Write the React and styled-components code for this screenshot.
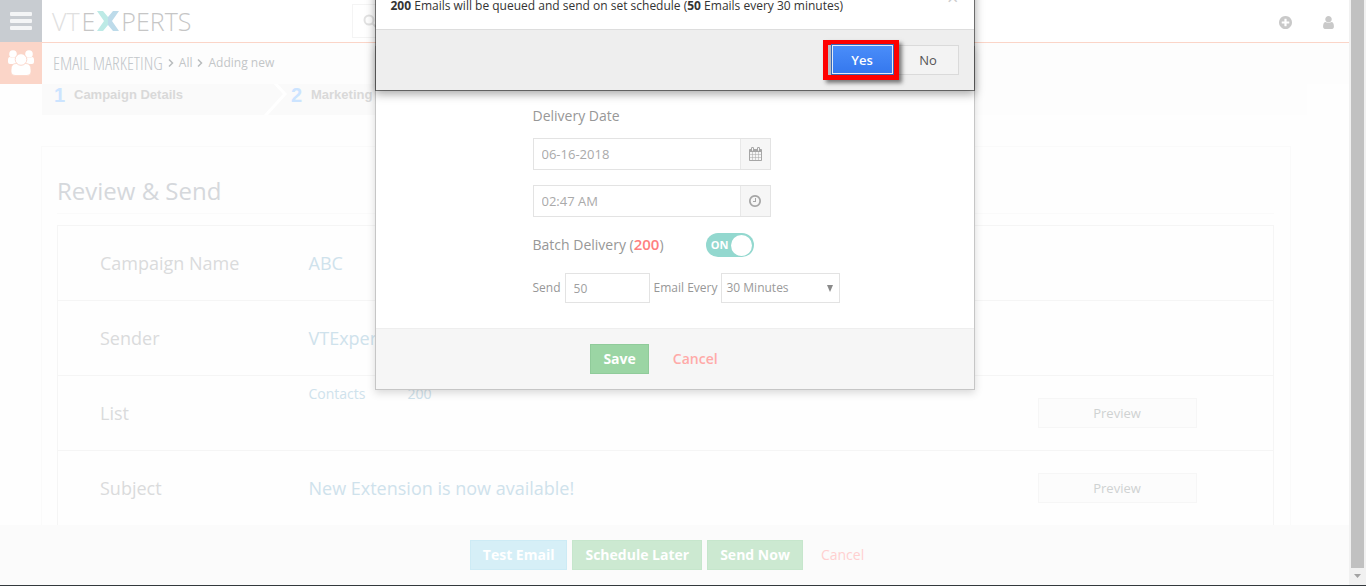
import React from 'react';
import styled, { createGlobalStyle, css } from 'styled-components';

const GlobalStyle = createGlobalStyle`
  * { box-sizing: border-box; }
  body { margin: 0; background: #fefefe; font-family: "Open Sans", sans-serif; font-size: 13px; line-height: 20px; color: #cfd3d6; }
  button, input, select { font: inherit; margin: 0; }
  h1, p { margin: 0; font-weight: 400; }
`;

const Screen = styled.div`
  display: flex;
  flex-direction: column;
  height: 100vh;
  overflow: hidden;
  border-bottom: 1px solid #33393d;
`;
const Viewport = styled.div`
  display: flex;
  flex: 1;
  min-height: 0;
`;
const Page = styled.div`
  position: relative;
  display: flex;
  flex-direction: column;
  flex: 1;
  min-width: 0;
  overflow: hidden;
`;
const ScrollTrack = styled.div`
  display: flex;
  flex-direction: column;
  align-items: center;
  width: 17px;
  padding-right: 1px;
  background: #f1f1f1;
`;
const ScrollThumb = styled.div`
  flex: 1;
  width: 13px;
  background: #c1c1c1;
`;
const ScrollArrow = styled.svg`
  display: block;
  width: 13px;
  height: 17px;
  fill: #a3a3a3;
`;

const Upper = styled.div`
  display: flex;
  flex: none;
`;
const Rail = styled.nav`
  display: flex;
  flex-direction: column;
  width: 42px;
`;
const RailButton = styled.button`
  display: flex;
  align-items: center;
  justify-content: center;
  width: 42px;
  height: 42px;
  padding: 0;
  border: 0;
  background: ${(p) => (p.$active ? '#fbd5c8' : '#c8ccd1')};
`;
const Bars = () => (
  <svg width="22" height="18" viewBox="0 0 22 18" fill="#f4f5f6">
    <rect width="22" height="4" rx="1" />
    <rect y="7" width="22" height="4" rx="1" />
    <rect y="14" width="22" height="4" rx="1" />
  </svg>
);
const People = () => (
  <svg width="26" height="26" viewBox="0 0 26 26" fill="#fff">
    <circle cx="5" cy="4" r="3.8" />
    <circle cx="21" cy="4" r="3.8" />
    <path d="M0 10q0-3 2-3 3 2 6 0l1 1v6H2q-2 0-2-2z" />
    <path d="M26 10q0-3-2-3-3 2-6 0l-1 1v6h7q2 0 2-2z" />
    <path d="M3 20q0-6.500 5-6.500h10q5 0 5 6.500v2q0 3.500-4 3.500H7q-4 0-4-3.500z" stroke="#fbd5c8" strokeWidth="0.8" />
    <circle cx="13" cy="9.500" r="5.800" stroke="#fbd5c8" strokeWidth="0.9" />
  </svg>
);

const Top = styled.div`
  flex: 1;
  min-width: 0;
`;
const Header = styled.header`
  display: flex;
  align-items: center;
  height: 43px;
  padding: 0 14px 0 10px;
  background: #fff;
  border-bottom: 1px solid #fbd5c8;
`;
const Logo = styled.div`
  display: flex;
  align-items: center;
  width: 140px;
  gap: 2px;
  font: 300 25px/26px "Open Sans", sans-serif;
  color: #c6c6c6;
`;
const LogoPale = styled.span`
  color: #e0e0e0;
`;
const SearchBox = styled.button`
  display: flex;
  align-items: center;
  width: 300px;
  height: 34px;
  margin-left: 160px;
  padding: 0 10px;
  border: 1px solid #f4f4f4;
  background: #fff;
`;
const HeaderTools = styled.div`
  display: flex;
  gap: 30px;
  margin-left: auto;
  padding-top: 2px;
`;
const IconButton = styled.button`
  display: flex;
  padding: 0;
  border: 0;
  background: none;
  color: #c9c9c9;
`;
const Crumbs = styled.nav`
  display: flex;
  align-items: center;
  gap: 5px;
  height: 41px;
  padding: 0 0 2px 11px;
  background: #fdfdfd;
  font-size: 12px;
  color: #c3c6c8;
  svg { display: block; }
`;
const CrumbTitle = styled.a`
  font: 300 18px/20px "Open Sans Condensed Light", "Roboto Condensed Light", "Roboto Condensed", "Liberation Sans Narrow", "Open Sans Condensed", sans-serif;
  color: #c3c7cb;
  text-decoration: none;
`;
const CrumbLink = styled.a`
  color: inherit;
  text-decoration: none;
`;

const Main = styled.main`
  flex: 1;
  min-height: 0;
  padding: 0 58px 0 41px;
  overflow: hidden;
`;
const Steps = styled.ol`
  display: flex;
  height: 31px;
  margin: 0 -16px 31px 1px;
  padding: 0;
  list-style: none;
  background: #fdfdfd;
`;
const Step = styled.li`
  display: flex;
  align-items: flex-start;
  width: 245px;
  padding-left: 12px;
  background: #fafafa;
  font: 700 13px/22px "Liberation Sans", sans-serif;
  color: #d9d9d9;
  & + & { padding-left: 4px; }
`;
const StepNumber = styled.span`
  width: 20px;
  font-size: 20px;
  color: #cce4ff;
`;
const StepArrow = styled.svg`
  display: block;
  flex: none;
  width: 24px;
  height: 31px;
  margin-left: auto;
`;
const Panel = styled.section`
  padding: 0 16px 0 15px;
  border: 1px solid #fafafa;
`;
const PanelTitle = styled.h1`
  height: 67px;
  margin-bottom: 11px;
  padding-top: 28px;
  border-bottom: 1px solid #fafafa;
  font-size: 24px;
  line-height: 32px;
  color: #d5d8dc;
`;
const Summary = styled.table`
  width: 100%;
  border: 1px solid #f5f5f5;
  border-collapse: collapse;
  table-layout: fixed;
`;
const Row = styled.tr`
  height: 75px;
  border-top: 1px solid #f5f5f5;
`;
const Label = styled.th`
  width: 209px;
  padding: 0 0 0 42px;
  text-align: left;
  font-weight: 400;
  font-size: 18px;
  line-height: 24px;
  color: #dadbdc;
`;
const Value = styled.td`
  padding: 0 0 0 42px;
  font-size: 18px;
  line-height: 24px;
  color: #cfe2ec;
`;
const ListValue = styled.div`
  display: flex;
  gap: 42px;
  height: 58px;
  font-size: 14px;
  line-height: 20px;
`;
const Action = styled.td`
  width: 236px;
  padding: 0;
`;
const PreviewButton = styled.button`
  display: block;
  width: 159px;
  height: 30px;
  padding: 0;
  border: 1px solid #f6f6f6;
  background: #fcfcfc;
  color: #cfd2d2;
`;

const FooterBar = styled.footer`
  display: flex;
  flex: none;
  align-items: center;
  justify-content: center;
  gap: 5px;
  height: 60px;
  padding-right: 2px;
  background: #fbfbfb;
`;
const tones = {
  info: css`background: #d6eff7; border-color: #cdebf5; color: #fff;`,
  pale: css`background: #cce9d1; border-color: #c6e6cc; color: #fff;`,
  success: css`background: #9bd5a4; border-color: #90cb9a; color: #fff;`,
};
const SolidButton = styled.button`
  height: 30px;
  padding: 0 12px;
  border: 1px solid;
  font-size: 14px;
  font-weight: 700;
  line-height: 20px;
  ${(p) => tones[p.$tone]}
`;
const CancelLink = styled.a`
  padding: 0 13px;
  font-size: 14px;
  font-weight: ${(p) => (p.$strong ? 600 : 400)};
  color: ${(p) => (p.$strong ? '#ffaaa8' : '#ffd0d0')};
  text-decoration: none;
`;

const Dialog = styled.section`
  position: absolute;
  left: 50%;
  width: 600px;
  margin-left: -300px;
  background: #fff;
  background-clip: padding-box;
`;
const ScheduleDialog = styled(Dialog)`
  top: 46px;
  border: 1px solid #c6c6c6;
  box-shadow: 0 3px 8px rgba(0, 0, 0, 0.15);
  color: #979797;
`;
const ScheduleForm = styled.div`
  display: flex;
  flex-direction: column;
  align-items: flex-start;
  height: 281px;
  padding: 59px 0 0 157px;
  font-size: 14px;
`;
const FieldLabel = styled.label`
  margin-bottom: 12px;
`;
const Field = styled.div`
  display: flex;
  height: 32px;
  margin-bottom: 15px;
  border: 1px solid #e3e3e3;
`;
const FieldInput = styled.input`
  width: 206px;
  padding: 0 8px;
  border: 0;
  background: #fff;
  font-size: 13px;
  color: #aaa;
`;
const Addon = styled.span`
  display: flex;
  align-items: center;
  justify-content: center;
  width: 30px;
  border-left: 1px solid #e8e8e8;
  background: #f6f6f6;
  color: #a6a6a6;
`;
const BatchRow = styled.div`
  display: flex;
  align-items: center;
  gap: 42px;
  height: 26px;
  margin-bottom: 15px;
`;
const Count = styled.strong`
  font-size: 15px;
  line-height: 1;
  font-weight: 600;
  color: #ff8080;
`;
const Toggle = styled.label`
  display: flex;
  align-items: center;
  justify-content: flex-end;
  gap: 2px;
  width: 48px;
  height: 24px;
  padding-right: 2px;
  border-radius: 12px;
  background: #93d8cf;
  font: 700 11px/24px "Open Sans", sans-serif;
  color: #fff;
`;
const ToggleInput = styled.input`
  appearance: none;
  width: 21px;
  height: 21px;
  border-radius: 50%;
  background: #fff;
`;
const SendRow = styled.div`
  display: flex;
  align-items: center;
  gap: 4px;
  font-size: 12px;
`;
const CountInput = styled.input`
  width: 85px;
  height: 30px;
  padding: 0 8px;
  border: 1px solid #e3e3e3;
  background: #fff;
  font-size: 12px;
  color: #a0a0a0;
`;
const SelectWrap = styled.span`
  display: grid;
  align-items: center;
  > * { grid-area: 1 / 1; }
  svg { justify-self: end; margin-right: 7px; pointer-events: none; }
`;
const Interval = styled.select`
  appearance: none;
  width: 119px;
  height: 30px;
  padding: 0 4px;
  border: 1px solid #e3e3e3;
  border-radius: 0;
  background: #fff;
  font-size: 12px;
  color: #9a9a9a;
`;
const ScheduleFooter = styled.div`
  display: flex;
  align-items: center;
  justify-content: center;
  gap: 11px;
  height: 61px;
  padding-right: 28px;
  border-top: 1px solid #eee;
  background: #f6f6f6;
`;

const ConfirmDialog = styled(Dialog)`
  top: -30px;
  border: 1px solid rgba(0, 0, 0, 0.48);
  box-shadow: 0 3px 9px rgba(0, 0, 0, 0.35);
  color: #333;
`;
const ConfirmBody = styled.div`
  display: flex;
  justify-content: space-between;
  height: 58px;
  padding: 25px 15px 0 15px;
  font-size: 12px;
`;
const Message = styled.p`
  strong { font-weight: 700; color: #333; }
`;
const CloseButton = styled.button`
  height: 20px;
  margin-top: -8px;
  padding: 0;
  border: 0;
  background: none;
  font-size: 20px;
  line-height: 20px;
  color: #ccc;
`;
const ConfirmFooter = styled.div`
  display: flex;
  align-items: center;
  justify-content: flex-end;
  height: 61px;
  padding-right: 15px;
  border-top: 1px solid #ddd;
  background: #eee;
`;
const Highlight = styled.div`
  position: relative;
  z-index: 1;
  padding: 0 1px 1px 4px;
  border: 5px solid #fe0000;
  background: #b9bcc2;
  box-shadow: 3px 3px 4px rgba(0, 0, 0, 0.5);
`;
const YesButton = styled.button`
  display: block;
  width: 61px;
  height: 29px;
  padding: 0;
  border: 1px solid #e6ebf5;
  outline: 1px solid #3567b8;
  background: linear-gradient(#4a8df9, #3578ee);
  font-weight: 600;
  color: #fff;
`;
const NoButton = styled.button`
  width: 60px;
  height: 30px;
  padding: 0;
  border: 1px solid #dadada;
  border-left: 0;
  background: #f3f3f3;
  color: #555;
`;

const Glyph = ({ d, box, w, h }) => (
  <svg width={w} height={h} viewBox={box} fill="currentColor" aria-hidden="true">
    <path d={d} />
  </svg>
);
const PLUS = 'M1216 832v-128q0-26-19-45t-45-19h-256v-256q0-26-19-45t-45-19h-128q-26 0-45 19t-19 45v256h-256q-26 0-45 19t-19 45v128q0 26 19 45t45 19h256v256q0 26 19 45t45 19h128q26 0 45-19t19-45v-256h256q26 0 45-19t19-45zm320-64q0 209-103 385.5t-279.5 279.5-385.5 103-385.5-103-279.5-279.5-103-385.5 103-385.5 279.5-279.5 385.5-103 385.5 103 279.5 279.5 103 385.5z';
const USER = 'M1280 1271q0 109-62.5 187t-150.5 78h-854q-88 0-150.5-78t-62.5-187q0-85 8.5-160.5t31.5-152 58.5-131 94-89 134.5-34.5q131 128 313 128t313-128q76 0 134.5 34.5t94 89 58.5 131 31.5 152 8.5 160.5zm-256-887q0 159-112.5 271.5t-271.5 112.5-271.5-112.5-112.5-271.5 112.5-271.5 271.5-112.5 271.5 112.5 112.5 271.5z';
const CLOCK = 'M896 544v448q0 14-9 23t-23 9h-320q-14 0-23-9t-9-23v-64q0-14 9-23t23-9h224v-352q0-14 9-23t23-9h64q14 0 23 9t9 23zm416 352q0-148-73-273t-198-198-273-73-273 73-198 198-73 273 73 273 198 198 273 73 273-73 198-198 73-273zm224 0q0 209-103 385.5t-279.5 279.5-385.5 103-385.5-103-279.5-279.5-103-385.5 103-385.5 279.5-279.5 385.5-103 385.5 103 279.5 279.5 103 385.5z';
const CALENDAR = 'M128 1664h288v-288h-288v288zm352 0h320v-288h-320v288zm-352-352h288v-320h-288v320zm352 0h320v-320h-320v320zm-352-384h288v-288h-288v288zm736 736h320v-288h-320v288zm-384-736h320v-288h-320v288zm768 736h288v-288h-288v288zm-384-352h320v-320h-320v320zm-352-864v-288q0-13-9.5-22.5t-22.5-9.5h-64q-13 0-22.5 9.5t-9.5 22.5v288q0 13 9.5 22.5t22.5 9.5h64q13 0 22.5-9.5t9.5-22.5zm736 864h288v-320h-288v320zm-384-384h320v-288h-320v288zm384 0h288v-288h-288v288zm32-480v-288q0-13-9.5-22.5t-22.5-9.5h-64q-13 0-22.5 9.5t-9.5 22.5v288q0 13 9.5 22.5t22.5 9.5h64q13 0 22.5-9.5t9.5-22.5zm384-64v1280q0 52-38 90t-90 38h-1408q-52 0-90-38t-38-90v-1280q0-52 38-90t90-38h128v-96q0-66 47-113t113-47h64q66 0 113 47t47 113v96h384v-96q0-66 47-113t113-47h64q66 0 113 47t47 113v96h128q52 0 90 38t38 90z';

const Chevron = () => (
  <svg width="6" height="8" viewBox="0 0 6 8" fill="none" stroke="#b9bcbe" strokeWidth="1.5">
    <path d="M1 0.5L4.5 4L1 7.5" />
  </svg>
);
const LogoMark = () => (
  <svg width="22" height="20" viewBox="0 0 22 20">
    <path d="M0 0h6l5 6v8l-5 6H0l7-10z" fill="#bdeae6" />
    <path d="M22 0h-6l-5 6v8l5 6h6l-7-10z" fill="#bddbea" />
  </svg>
);

export default function App() {
  return (
    <Screen>
      <GlobalStyle />
      <Viewport>
        <Page>
          <Upper>
            <Rail>
              <RailButton aria-label="Menu"><Bars /></RailButton>
              <RailButton $active aria-label="Contacts"><People /></RailButton>
            </Rail>
            <Top>
              <Header>
                <Logo><LogoPale>VT</LogoPale><span>E</span><LogoMark /><span>PERTS</span></Logo>
                <SearchBox aria-label="Search">
                  <svg width="14" height="14" viewBox="0 0 14 14" fill="none" stroke="#e2e2e2" strokeWidth="2">
                    <circle cx="6" cy="6" r="4.5" />
                    <path d="M9.5 9.5L13 13" />
                  </svg>
                </SearchBox>
                <HeaderTools>
                  <IconButton aria-label="Quick create"><Glyph d={PLUS} box="0 0 1536 1536" w={13} h={13} /></IconButton>
                  <IconButton aria-label="Account"><Glyph d={USER} box="0 0 1280 1536" w={13} h={13} /></IconButton>
                </HeaderTools>
              </Header>
              <Crumbs>
                <CrumbTitle href="#">EMAIL MARKETING</CrumbTitle>
                <Chevron />
                <CrumbLink href="#">All</CrumbLink>
                <Chevron />
                <CrumbLink href="#">Adding new</CrumbLink>
              </Crumbs>
            </Top>
          </Upper>

          <Main>
            <Steps>
              <Step>
                <StepNumber>1</StepNumber>Campaign Details
                <StepArrow viewBox="0 0 24 31" fill="none" stroke="#fff" strokeWidth="3"><path d="M10 -3L22 10L2 32" /></StepArrow>
              </Step>
              <Step><StepNumber>2</StepNumber>Marketing</Step>
            </Steps>
            <Panel>
              <PanelTitle>Review &amp; Send</PanelTitle>
              <Summary>
                <tbody>
                  <Row><Label scope="row">Campaign Name</Label><Value>ABC</Value><Action /></Row>
                  <Row><Label scope="row">Sender</Label><Value>VTExperts</Value><Action /></Row>
                  <Row>
                    <Label scope="row">List</Label>
                    <Value><ListValue><span>Contacts</span><span>200</span></ListValue></Value>
                    <Action><PreviewButton>Preview</PreviewButton></Action>
                  </Row>
                  <Row>
                    <Label scope="row">Subject</Label>
                    <Value>New Extension is now available!</Value>
                    <Action><PreviewButton>Preview</PreviewButton></Action>
                  </Row>
                </tbody>
              </Summary>
            </Panel>
          </Main>

          <FooterBar>
            <SolidButton $tone="info">Test Email</SolidButton>
            <SolidButton $tone="pale">Schedule Later</SolidButton>
            <SolidButton $tone="pale">Send Now</SolidButton>
            <CancelLink href="#">Cancel</CancelLink>
          </FooterBar>

          <ScheduleDialog role="dialog" aria-label="Schedule">
            <ScheduleForm>
              <FieldLabel htmlFor="date">Delivery Date</FieldLabel>
              <Field>
                <FieldInput id="date" defaultValue="06-16-2018" />
                <Addon><Glyph d={CALENDAR} box="0 0 1664 1792" w={13} h={14} /></Addon>
              </Field>
              <Field>
                <FieldInput aria-label="Delivery time" defaultValue="02:47 AM" />
                <Addon><Glyph d={CLOCK} box="0 128 1536 1536" w={12} h={12} /></Addon>
              </Field>
              <BatchRow>
                <span>Batch Delivery (<Count>200</Count>)</span>
                <Toggle>ON<ToggleInput type="checkbox" defaultChecked aria-label="Batch delivery" /></Toggle>
              </BatchRow>
              <SendRow>
                <label htmlFor="count">Send</label>
                <CountInput id="count" defaultValue="50" />
                <label htmlFor="every">Email Every</label>
                <SelectWrap>
                  <Interval id="every"><option>30 Minutes</option></Interval>
                  <svg width="6" height="7" viewBox="0 0 6 7" fill="#8a8a8a"><path d="M0 0h6L3 7z" /></svg>
                </SelectWrap>
              </SendRow>
            </ScheduleForm>
            <ScheduleFooter>
              <SolidButton $tone="success">Save</SolidButton>
              <CancelLink $strong href="#">Cancel</CancelLink>
            </ScheduleFooter>
          </ScheduleDialog>

          <ConfirmDialog role="dialog" aria-label="Confirm">
            <ConfirmBody>
              <Message><strong>200</strong> Emails will be queued and send on set schedule (<strong>50</strong> Emails every 30 minutes)</Message>
              <CloseButton aria-label="Close">×</CloseButton>
            </ConfirmBody>
            <ConfirmFooter>
              <Highlight><YesButton>Yes</YesButton></Highlight>
              <NoButton>No</NoButton>
            </ConfirmFooter>
          </ConfirmDialog>
        </Page>
        <ScrollTrack>
          <ScrollThumb />
          <ScrollArrow viewBox="0 0 13 17"><path d="M3 6h7L6.500 10z" /></ScrollArrow>
        </ScrollTrack>
      </Viewport>
    </Screen>
  );
}
